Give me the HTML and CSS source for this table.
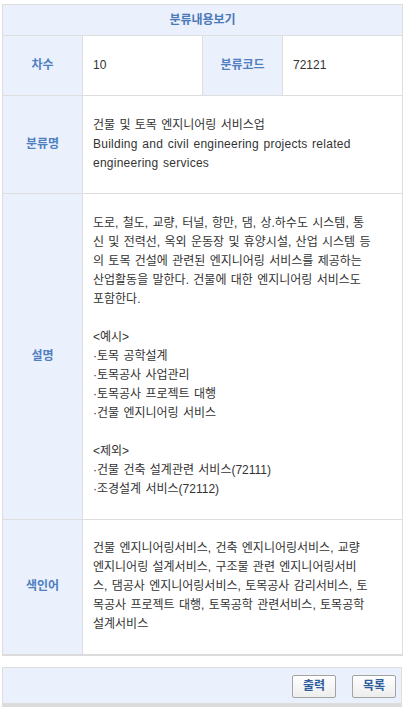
FILE: index.html
```html
<!DOCTYPE html>
<html lang="ko">
<head>
<meta charset="utf-8">
<title>분류내용보기</title>
<link rel="stylesheet" href="styles.css">
</head>
<body>
<table class="view">
  <colgroup>
    <col class="c-label"><col class="c-value"><col class="c-label"><col class="c-value">
  </colgroup>
  <thead>
    <tr class="r-head"><th colspan="4" class="title">분류내용보기</th></tr>
  </thead>
  <tbody>
    <tr class="r-1">
      <th class="label">차수</th>
      <td class="value">10</td>
      <th class="label">분류코드</th>
      <td class="value">72121</td>
    </tr>
    <tr class="r-2">
      <th class="label">분류명</th>
      <td class="value" colspan="3">건물 및 토목 엔지니어링 서비스업<br><span class="en">Building and civil engineering projects related<br>engineering services</span></td>
    </tr>
    <tr class="r-3">
      <th class="label">설명</th>
      <td class="value" colspan="3">도로, 철도, 교량, 터널, 항만, 댐, 상.하수도 시스템, 통<br>신 및 전력선, 옥외 운동장 및 휴양시설, 산업 시스템 등<br>의 토목 건설에 관련된 엔지니어링 서비스를 제공하는<br>산업활동을 말한다. 건물에 대한 엔지니어링 서비스도<br>포함한다.<br><br>&lt;예시&gt;<br>·토목 공학설계<br>·토목공사 사업관리<br>·토목공사 프로젝트 대행<br>·건물 엔지니어링 서비스<br><br>&lt;제외&gt;<br>·건물 건축 설계관련 서비스(72111)<br>·조경설계 서비스(72112)</td>
    </tr>
    <tr class="r-4">
      <th class="label">색인어</th>
      <td class="value" colspan="3">건물 엔지니어링서비스, 건축 엔지니어링서비스, 교량<br>엔지니어링 설계서비스, 구조물 관련 엔지니어링서비<br>스, 댐공사 엔지니어링서비스, 토목공사 감리서비스, 토<br>목공사 프로젝트 대행, 토목공학 관련서비스, 토목공학<br>설계서비스</td>
    </tr>
  </tbody>
</table>
<div class="btn-bar">
  <button class="btn" type="button">출력</button>
  <button class="btn" type="button">목록</button>
</div>
</body>
</html>
```
FILE: styles.css
```css
html, body {
  margin: 0;
  padding: 0;
  background: #fff;
}
body {
  padding: 4px 1px 0 2px;
  font-family: "Liberation Sans", "Noto Sans CJK KR", sans-serif;
  font-size: 12px;
  color: #333;
}
.view {
  width: 400px;
  table-layout: fixed;
  border-collapse: collapse;
  border: 1px solid #dedede;
  border-bottom: 2px solid #dcdcdc;
}
.c-label { width: 80px; }
.c-value { width: 120px; }
.view th, .view td {
  border: 1px solid #dedede;
  padding: 0 10px;
  line-height: 19px;
  vertical-align: middle;
}
.view .title {
  background: #ebf0fd;
  color: #4a79b8;
  font-weight: bold;
  text-align: center;
}
.view .label {
  background: #ebf0fd;
  color: #4f80c0;
  font-weight: bold;
  text-align: center;
  padding: 0;
}
.view .value {
  text-align: left;
  color: #333;
  background: #fff;
  word-spacing: 1px;
}
.view .value .en {
  letter-spacing: 0.25px;
}
.r-head { height: 31px; }
.r-1 { height: 60px; }
.r-2 { height: 98px; }
.r-3 { height: 326px; }
.r-4 { height: 135px; }

.btn-bar {
  width: 400px;
  height: 40px;
  margin-top: 11px;
  padding: 7px 5px 0 0;
  box-sizing: border-box;
  background: #ebf0fd;
  border: 1px solid #dedede;
  border-bottom: 4px solid #dcdcdc;
  display: flex;
  justify-content: flex-end;
  align-items: flex-start;
  gap: 16px;
}
.btn {
  width: 44px;
  height: 23px;
  padding: 0;
  border: 1px solid #a3a3a3;
  border-radius: 2px;
  background: linear-gradient(#ffffff, #ededed);
  font-family: "Liberation Sans", "Noto Sans CJK KR", sans-serif;
  font-size: 12px;
  font-weight: bold;
  color: #2f5e9f;
  line-height: 21px;
}
```
